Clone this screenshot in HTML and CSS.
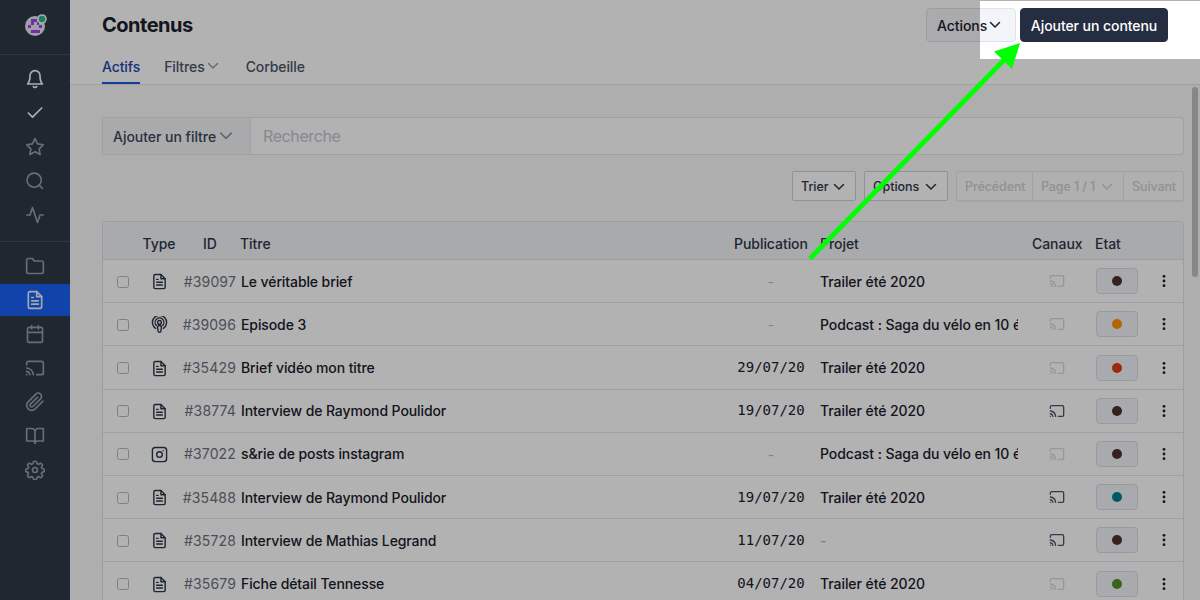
FILE: index.html
```html
<!DOCTYPE html>
<html lang="fr">
<head>
<meta charset="utf-8">
<title>Contenus</title>
<link rel="stylesheet" href="styles.css">
</head>
<body>
<svg class="defs" width="0" height="0">
  <symbol id="file" viewBox="0 0 24 24"><path d="M14 2H6a2 2 0 0 0-2 2v16a2 2 0 0 0 2 2h12a2 2 0 0 0 2-2V8z"/><path d="M14 2v6h6M16 13H8M16 17H8M10 9H8"/></symbol>
  <symbol id="cast" viewBox="0 0 24 24"><path d="M2 16.1A5 5 0 0 1 5.9 20M2 12.05A9 9 0 0 1 9.95 20M2 8V6a2 2 0 0 1 2-2h16a2 2 0 0 1 2 2v12a2 2 0 0 1-2 2h-6M2 20h.01"/></symbol>
  <symbol id="podcast" viewBox="0 0 24 24"><path d="M6.5 17.5a10 10 0 1 1 11 0M7.6 13.4a6.2 6.2 0 1 1 8.8 0"/><circle cx="12" cy="9" r="2.6"/><path d="M9.3 16a2.7 2.7 0 0 1 5.4 0l-.7 5a2 2 0 0 1-4 0z"/></symbol>
  <symbol id="insta" viewBox="0 0 24 24"><rect x="2" y="2" width="20" height="20" rx="4"/><circle cx="12" cy="12" r="4"/><path d="M17.2 6.8h.01"/></symbol>
  <symbol id="down" viewBox="0 0 12 12"><path d="M1.5 3.5 6 8l4.500-4.500"/></symbol>
</svg>
<div class="app">
  <nav class="sidebar">
    <div class="brand">
      <svg width="24" height="24" viewBox="0 0 24 24">
        <circle cx="11" cy="13" r="10" fill="#e9e4ee"/>
        <path fill="#9a44ee" d="M7 6h6v3h2v3h3v3h-3v-3h-2v-3h-3v3H7v3H4v-3h3zM7 17h9v3H7z"/>
        <circle cx="18" cy="6" r="4.800" fill="#f4f4f4"/><circle cx="18" cy="6" r="3.200" fill="#30b488"/>
      </svg>
    </div>
    <div class="group">
      <a class="item bright"><svg class="i20" viewBox="0 0 24 24"><path d="M18 8A6 6 0 0 0 6 8c0 7-3 10-3 10h18s-3-3-3-10M14 21a2.300 2.300 0 0 1-4 0"/></svg></a>
      <a class="item bright"><svg class="i20" viewBox="0 0 24 24"><path d="M20 6 9 17l-5-5"/></svg></a>
      <a class="item"><svg class="i20" viewBox="0 0 24 24"><path d="m12 2 3.090 6.260L22 9.270l-5 4.870 1.180 6.880L12 17.770l-6.180 3.250L7 14.140 2 9.270l6.910-1.010z"/></svg></a>
      <a class="item"><svg class="i20" viewBox="0 0 24 24"><circle cx="11" cy="11" r="8.500"/><path d="m21 21-4-4"/></svg></a>
      <a class="item"><svg class="i20" viewBox="0 0 24 24"><path d="M22 12h-4l-3 9L9 3l-3 9H2"/></svg></a>
    </div>
    <div class="group second">
      <a class="item"><svg class="i20" viewBox="0 0 24 24"><path d="M22 19a2 2 0 0 1-2 2H4a2 2 0 0 1-2-2V5a2 2 0 0 1 2-2h5l2 3h9a2 2 0 0 1 2 2z"/></svg></a>
      <a class="item active"><svg class="i20"><use href="#file"/></svg></a>
      <a class="item"><svg class="i20" viewBox="0 0 24 24"><rect x="3" y="4" width="18" height="18" rx="2"/><path d="M16 2v4M8 2v4M3 10h18"/></svg></a>
      <a class="item"><svg class="i20"><use href="#cast"/></svg></a>
      <a class="item"><svg class="i20" viewBox="0 0 24 24"><path d="m21.440 11.050-9.190 9.190a6 6 0 0 1-8.490-8.490l9.190-9.190a4 4 0 0 1 5.660 5.660l-9.200 9.190a2 2 0 0 1-2.830-2.830l8.490-8.480"/></svg></a>
      <a class="item"><svg class="i20" viewBox="0 0 24 24"><path d="M2 3h6a4 4 0 0 1 4 4v14a3 3 0 0 0-3-3H2zM22 3h-6a4 4 0 0 0-4 4v14a3 3 0 0 1 3-3h7z"/></svg></a>
      <a class="item"><svg class="i20" viewBox="0 0 24 24"><circle cx="12" cy="12" r="3"/><path d="M10 2.500c.5-1.300 3.500-1.300 4 0l.5 2 1.700.7 1.900-1.100c1.200-.6 3.200 1.400 2.700 2.700l-1.100 1.900.6 1.500 2 .6c1.300.5 1.300 3 0 3.500l-2 .6-.6 1.500 1.100 1.900c.5 1.300-1.500 3.300-2.700 2.700l-1.900-1.100-1.700.7-.5 1.900c-.5 1.300-3.500 1.300-4 0l-.5-1.900-1.700-.7-1.900 1.100c-1.200.6-3.200-1.400-2.700-2.700l1.100-1.900-.6-1.500-2-.6c-1.300-.5-1.300-3 0-3.500l2-.6.6-1.500-1.100-1.900C2.700 5.500 4.700 3.500 5.900 4.100l1.900 1.100 1.700-.7z"/></svg></a>
    </div>
  </nav>
  <main class="main">
    <header class="header">
      <div class="titlebar">
        <h1>Contenus</h1>
        <button class="btn actions">Actions<svg class="chev"><use href="#down"/></svg></button>
        <button class="btn primary">Ajouter un contenu</button>
      </div>
      <div class="tabs">
        <a class="tab current">Actifs</a>
        <a class="tab">Filtres<svg class="chev light"><use href="#down"/></svg></a>
        <a class="tab">Corbeille</a>
      </div>
    </header>
    <section class="content">
      <div class="search">
        <div class="filter">Ajouter un filtre<svg class="chev light big"><use href="#down"/></svg></div>
        <div class="field">Recherche</div>
      </div>
      <div class="tools">
        <button class="small">Trier<svg class="chev"><use href="#down"/></svg></button>
        <button class="small options">Options<svg class="chev"><use href="#down"/></svg></button>
        <div class="pager"><span class="prev">Précédent</span><span class="page">Page 1 / 1<svg class="chev"><use href="#down"/></svg></span><span class="next">Suivant</span></div>
      </div>
      <div class="table">
        <div class="row head"><span></span><span class="mid">Type</span><span class="idh">ID</span><span>Titre</span><span>Publication</span><span>Projet</span><span>Canaux</span><span class="etat">Etat</span><span></span></div>
        <div id="rows"></div>
      </div>
    </section>
    <div class="scrollbar"></div>
  </main>
</div>
<div class="spotlight"></div>
<svg class="arrow" width="1200" height="600"><path d="M810 258.500 1006 58" stroke="#00ff00" stroke-width="4.800"/><path d="M1020 43 994 51.500 1012 69z" fill="#00ff00"/></svg>
<script src="rows.js"></script>
</body>
</html>
```
FILE: styles.css
```css
* { box-sizing: border-box; }
body { margin: 0; width: 1200px; height: 600px; overflow: hidden; font: 500 14px/20px Inter, sans-serif; color: #1a202c; background: #fafafa; }
svg { fill: none; stroke: currentColor; stroke-width: 2; stroke-linecap: round; stroke-linejoin: round; flex: none; }
.defs { position: absolute; }
.app { display: flex; height: 600px; overflow: hidden; }
.sidebar { width: 70px; background: #2d3a47; color: #969ca8; flex: none; }
.brand { height: 55px; border-bottom: 1px solid #465260; padding: 13px 0 0 24px; }
.brand svg { stroke: none; display: block; }
.group { padding-top: 8px; display: flex; flex-direction: column; gap: 2px; height: 187px; border-bottom: 1px solid #465260; }
.group.second { border: 0; height: auto; }
.item { height: 32px; flex: none; display: flex; align-items: center; justify-content: center; }
.item.bright { color: #f7fafc; }
.item.active { background: #1a61f5; color: #edf2f7; }
.i20 { width: 20px; height: 20px; stroke-width: 2; }
.main { flex: 1; position: relative; height: 600px; overflow: hidden; }
.header { height: 85px; background: #fff; border-bottom: 1px solid #e2e5e9; padding: 8px 32px 0; }
.titlebar { display: flex; height: 34px; }
h1 { font-size: 20px; line-height: 35px; margin: 0 auto 0 0; font-weight: 700; letter-spacing: -.5px; }
button { font: inherit; color: inherit; background: #fff; display: flex; align-items: center; white-space: nowrap; }
.btn { height: 34px; border: 1px solid #dde2eb; border-radius: 4px; padding: 2px 10px 0; letter-spacing: -.07px; }
.actions { width: 90px; background: #f3f5f8; margin-right: 4px; }
.primary { width: 148px; background: #252d40; border-color: #252d40; color: #fff; justify-content: center; padding: 2px 0 0; }
.chev { width: 12px; height: 12px; stroke-width: 1.5; margin-left: 2px; }
.actions .chev { margin-top: -3px; }
.light { color: #8b95a5; stroke-width: 1.4; }
.tabs { display: flex; gap: 24px; padding-top: 10px; letter-spacing: -.1px; color: #4a5568; }
.tab { height: 32px; line-height: 30px; display: flex; }
.tab .chev { margin: 8px 0 0 2px; }
.tab.current { color: #2347b0; border-bottom: 2px solid #1a56db; }
.tab:last-child { margin-left: 3px; }
.content { padding: 32px 16px 0 32px; }
.search { display: flex; height: 38px; border: 1px solid #e2e5e9; border-radius: 3px; background: #fff; }
.filter { width: 148px; padding: 2px 0 0 10px; display: flex; align-items: center; background: #f2f4f7; border-right: 1px solid #e2e5e9; letter-spacing: -.03px; color: #3b4656; white-space: nowrap; }
.big { width: 14px; height: 14px; margin: -3px 0 0 3px; }
.field { padding: 0 12px; line-height: 37px; font-size: 16px; font-weight: 400; color: #c0c5cf; letter-spacing: -.4px; }
.tools { display: flex; justify-content: flex-end; gap: 8px; margin-top: 16px; font-size: 12.5px; }
.small { height: 30px; width: 64px; border: 1px solid #ccd2da; border-radius: 2px; padding: 1px 8px 0; justify-content: space-between; color: #2d3748; letter-spacing: -.05px; }
.small .chev { margin-right: 2px; }
.options { width: 84px; }
.pager { display: flex; height: 30px; width: 228px; border: 1px solid #e4e7eb; border-radius: 3px; background: #fcfcfc; color: #cdd1d7; line-height: 28px; box-shadow: 0 1px 1px #e9ebee; letter-spacing: -.1px; }
.pager span { display: flex; align-items: center; padding: 1px 0 0 8px; white-space: nowrap; }
.pager span + span { border-left: 1px solid #e4e7eb; }
.prev { width: 75px; } .page { width: 91px; } .page .chev { margin-left: 6px; } .next { width: 60px; }
.table { margin-top: 20px; height: 420px; border: 1px solid #e0e3e8; border-radius: 3px 3px 0 0; background: #fff; overflow: hidden; }
.row { display: grid; grid-template-columns: 39px 34px 64px 1fr 86px 212px 50px 70px 31px; height: 43px; border-bottom: 1px solid #e2e4e8; align-items: center; white-space: nowrap; }
.row.head { height: 38px; background: #f2f4f7; padding-top: 7px; color: #2d3748; border-color: #dee1e6; letter-spacing: -.05px; }
.mid { text-align: center; }
.idh { padding-left: 27px; }
.etat { padding-left: 13px; }
.check { width: 12px; height: 12px; border: 1px solid #b4b7bc; border-radius: 2.500px; margin: 2px 0 0 14px; }
.type { color: #2d3748; display: flex; justify-content: center; }
.type svg { width: 17px; height: 17px; stroke-width: 2; }
.id { text-align: right; padding: 2px 4px 0 0; font-weight: 400; color: #6b7280; letter-spacing: .15px; }
.name { padding: 2px 0 0 1px; letter-spacing: -.1px; }
.date { padding-right: 12px; text-align: center; font: 400 14px/20px "DejaVu Sans Mono", monospace; }
.none { color: #b5bac3; font-family: Inter, sans-serif; padding-top: 2px; }
.project { padding-top: 2px; width: 198px; overflow: hidden; letter-spacing: -.07px; }
.canal { display: flex; justify-content: center; color: #d5d8dc; }
.canal svg { width: 16px; height: 16px; }
.canal.on { color: #4a5568; }
.state { width: 42px; height: 26px; margin: 0 0 0 14px; background: #f2f4f8; border: 1px solid #d9dde7; border-radius: 4px; display: flex; align-items: center; justify-content: center; }
.dot { width: 10px; height: 10px; border-radius: 50%; }
.brown { background: #50302e; } .orange { background: #ff9100; } .red { background: #dd3f10; } .teal { background: #00818f; } .green { background: #50902c; }
.more { width: 16px; height: 16px; margin-left: 4px; fill: #1a202c; stroke: none; }
.tall { height: 44px; padding-top: 1px; }
.raised .id, .raised .name, .raised .project { padding-top: 0; }
.raised .date { padding-bottom: 2px; }
.raised .none { padding-bottom: 0; }
.raised .check { margin-top: 0; }
.scrollbar { position: absolute; right: 2px; top: 87px; width: 6px; height: 190px; border-radius: 3px; background: #c2c2c2; }
.spotlight { position: absolute; left: 980px; top: 1px; width: 220px; height: 58px; box-shadow: 0 0 0 1300px rgba(0,0,0,.3); }
.arrow { position: absolute; left: 0; top: 0; stroke: none; stroke-linecap: butt; }
```
FILE: rows.js
```js
const rows = [
  ['file', '39097', 'Le véritable brief', '', 'Trailer été 2020', 0, 'brown', ''],
  ['podcast', '39096', 'Episode 3', '', 'Podcast : Saga du vélo en 10 é', 0, 'orange', ''],
  ['file', '35429', 'Brief vidéo mon titre', '29/07/20', 'Trailer été 2020', 0, 'red', ' tall raised'],
  ['file', '38774', 'Interview de Raymond Poulidor', '19/07/20', 'Trailer été 2020', 1, 'brown', ' raised'],
  ['insta', '37022', 's&amp;rie de posts instagram', '', 'Podcast : Saga du vélo en 10 é', 0, 'brown', ' raised'],
  ['file', '35488', 'Interview de Raymond Poulidor', '19/07/20', 'Trailer été 2020', 1, 'teal', ''],
  ['file', '35728', 'Interview de Mathias Legrand', '11/07/20', '', 1, 'brown', ''],
  ['file', '35679', 'Fiche détail Tennesse', '04/07/20', 'Trailer été 2020', 0, 'green', ' tall raised']
];
document.getElementById('rows').innerHTML = rows.map(([icon, id, name, date, project, on, color, fit]) => `
<div class="row${fit}"><span class="check"></span><span class="type"><svg><use href="#${icon}"/></svg></span><span class="id">#${id}</span><span class="name">${name}</span><span class="date${date ? '' : ' none'}">${date || '-'}</span><span class="project${project ? '' : ' none'}">${project || '-'}</span><span class="canal${on ? ' on' : ''}"><svg><use href="#cast"/></svg></span><span class="state"><span class="dot ${color}"></span></span><svg class="more" viewBox="0 0 16 16"><circle cx="8" cy="3.300" r="1.400"/><circle cx="8" cy="8" r="1.400"/><circle cx="8" cy="12.700" r="1.400"/></svg></div>`).join('');
```
